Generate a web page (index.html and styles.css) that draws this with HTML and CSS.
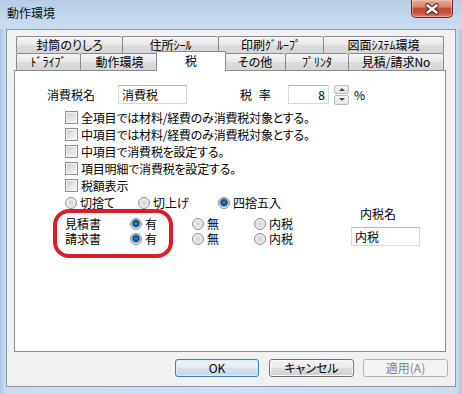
FILE: index.html
```html
<!DOCTYPE html>
<html lang="ja">
<head>
<meta charset="utf-8">
<title>動作環境</title>
<link rel="stylesheet" href="styles.css">
</head>
<body>
<div class="window">
  <div class="titlebar">
    <span class="title">動作環境</span>
    <div class="close">
      <svg width="40" height="16" viewBox="0 0 40 16">
        <path d="M15.5 4.5 L24.5 11.5 M24.5 4.5 L15.5 11.5" stroke="#4a1a14" stroke-width="4.6" stroke-linecap="round" fill="none"/>
        <path d="M15.5 4.5 L24.5 11.5 M24.5 4.5 L15.5 11.5" stroke="#ffffff" stroke-width="2.6" stroke-linecap="round" fill="none"/>
      </svg>
    </div>
  </div>
  <div class="client">
    <div class="tabs">
      <div class="tabrow">
        <div class="tab t-futo">封筒のりしろ</div>
        <div class="tab t-jusho">住所ｼｰﾙ</div>
        <div class="tab t-insatsu">印刷ｸﾞﾙｰﾌﾟ</div>
        <div class="tab t-zumen last">図面ｼｽﾃﾑ環境</div>
      </div>
      <div class="tabrow">
        <div class="tab t-drive">ﾄﾞﾗｲﾌﾞ</div>
        <div class="tab t-dosa">動作環境</div>
        <div class="tab selected">税</div>
        <div class="tab t-sonota">その他</div>
        <div class="tab t-printer">ﾌﾟﾘﾝﾀ</div>
        <div class="tab t-mitsu last">見積/請求No</div>
      </div>
    </div>
    <div class="panel">
      <div class="content">
        <div class="row-a">
          <span class="lbl-name">消費税名</span>
          <div class="field f-name">消費税</div>
          <span class="lbl-rate">税&nbsp;率</span>
          <div class="field f-rate">8</div>
          <div class="spin">
            <div class="spin-btn"><span class="arr up"></span></div>
            <div class="spin-btn"><span class="arr down"></span></div>
          </div>
          <span class="pct">%</span>
        </div>
        <div class="checks">
          <div class="check-row"><span class="cb"></span><span>全項目では材料/経費のみ消費税対象とする。</span></div>
          <div class="check-row"><span class="cb"></span><span>中項目では材料/経費のみ消費税対象とする。</span></div>
          <div class="check-row"><span class="cb"></span><span>中項目で消費税を設定する。</span></div>
          <div class="check-row"><span class="cb"></span><span>項目明細で消費税を設定する。</span></div>
          <div class="check-row"><span class="cb"></span><span>税額表示</span></div>
        </div>
        <div class="lower">
          <div class="lower-left">
            <div class="round-row">
              <div class="ropt w-kiri"><span class="radio"></span><span>切捨て</span></div>
              <div class="ropt w-age"><span class="radio"></span><span>切上げ</span></div>
              <div class="ropt"><span class="radio on"></span><span>四捨五入</span></div>
            </div>
            <div class="doc-rows">
              <div class="doc-row">
                <span class="doc-lbl">見積書</span>
                <div class="ropt w-doc"><span class="radio on"></span><span>有</span></div>
                <div class="ropt w-doc"><span class="radio"></span><span>無</span></div>
                <div class="ropt"><span class="radio"></span><span>内税</span></div>
              </div>
              <div class="doc-row">
                <span class="doc-lbl">請求書</span>
                <div class="ropt w-doc"><span class="radio on"></span><span>有</span></div>
                <div class="ropt w-doc"><span class="radio"></span><span>無</span></div>
                <div class="ropt"><span class="radio"></span><span>内税</span></div>
              </div>
            </div>
          </div>
          <div class="lower-right">
            <div class="lbl-uchi">内税名</div>
            <div class="field f-uchi">内税</div>
          </div>
        </div>
      </div>
      <div class="mark"></div>
    </div>
    <div class="buttons">
      <div class="btn default b-ok">OK</div>
      <div class="btn b-cancel">キャンセル</div>
      <div class="btn disabled b-apply">適用(A)</div>
    </div>
  </div>
</div>
</body>
</html>
```
FILE: styles.css
```css
* { box-sizing: border-box; }
html, body { margin: 0; padding: 0; }
body {
  width: 462px;
  height: 394px;
  overflow: hidden;
  font-family: "Noto Sans CJK JP", "Noto Sans", sans-serif;
  font-size: 12px;
  line-height: 14px;
  color: #000;
  font-feature-settings: "palt";
  background: #c4d7ed;
}
.window {
  width: 462px;
  height: 394px;
  display: flex;
  flex-direction: column;
  background: linear-gradient(to right, #aec8e5 0, #c9dcf0 5px, #cfe0f2 50%, #c9dcf0 457px, #aec8e5 462px);
}
.titlebar {
  height: 29px;
  flex: none;
  display: flex;
  justify-content: space-between;
  align-items: flex-start;
  padding-left: 7px;
  background: linear-gradient(to bottom, #b8cde5 0, #c5d8ed 60%, #cadcf0 100%);
}
.title {
  margin-top: 6px;
  line-height: 14px;
  color: #111;
}
.close {
  width: 42px;
  height: 18px;
  margin-right: 9px;
  border: 1px solid #6e2a22;
  border-top: none;
  border-radius: 0 0 5px 5px;
  background: linear-gradient(to bottom, #e8a898 0, #d98572 40%, #c44a35 50%, #c8533c 75%, #df7f5f 100%);
  box-shadow: inset 0 0 0 1px rgba(255, 220, 210, 0.45);
  display: flex;
  align-items: center;
  justify-content: center;
}
.client {
  flex: 1;
  margin: 0 6px 7px 6px;
  border: 1px solid #8b98a8;
  background: #f0f0f0;
  padding: 6px 7px 9px 7px;
  display: flex;
  flex-direction: column;
}
.tabs {
  width: 432px;
  padding-left: 2px;
  flex: none;
}
.tabrow {
  display: flex;
  height: 17px;
}
.tab {
  height: 17px;
  border: 1px solid #898c95;
  border-right: none;
  border-bottom: none;
  border-radius: 2px 2px 0 0;
  background: linear-gradient(to bottom, #f4f4f4 0, #e8e8e8 50%, #dcdcdc 51%, #d6d6d6 100%);
  display: flex;
  align-items: center;
  justify-content: center;
  line-height: 14px;
  white-space: nowrap;
}
.tab.last { border-right: 1px solid #898c95; }
.t-futo { width: 106px; }
.t-jusho { width: 96px; }
.t-insatsu { width: 105px; }
.t-zumen { width: 121px; }
.t-drive { width: 64px; }
.t-dosa { width: 78px; }
.t-sonota { width: 61px; }
.t-printer { width: 63px; }
.t-mitsu { width: 96px; }
.tab.selected {
  position: relative;
  z-index: 2;
  width: 70px;
  height: 20px;
  margin: -2px -2px -1px -2px;
  background: #fff;
  border-right: 1px solid #898c95;
  padding-bottom: 1px;
}
.panel {
  position: relative;
  width: 432px;
  flex: 1;
  background: #fff;
  border: 1px solid #898c95;
}
.content {
  padding: 14px 0 0 32px;
}
.row-a {
  display: flex;
  align-items: center;
  height: 19px;
}
.lbl-name { width: 71px; }
.field {
  height: 19px;
  border: 1px solid #d5d7dc;
  border-top-color: #b5b8bf;
  background: #fff;
  padding: 0 3px;
  line-height: 17px;
  white-space: nowrap;
}
.f-name { width: 69px; }
.lbl-rate { width: 48px; margin-left: 53px; letter-spacing: 2px; }
.f-rate { width: 41px; text-align: right; }
.spin {
  width: 15px;
  height: 20px;
  margin-left: 5px;
  display: flex;
  flex-direction: column;
  gap: 1px;
}
.spin-btn {
  flex: 1;
  border: 1px solid #b7bcc3;
  border-radius: 2px;
  background: linear-gradient(to bottom, #f7f7f7, #e2e4e7);
  display: flex;
  align-items: center;
  justify-content: center;
}
.arr {
  width: 0;
  height: 0;
  border-left: 3px solid transparent;
  border-right: 3px solid transparent;
}
.arr.up { border-bottom: 3px solid #4d4d4d; }
.arr.down { border-top: 3px solid #4d4d4d; }
.pct { margin-left: 5px; }
.checks {
  margin-top: 5px;
  margin-left: 18px;
}
.check-row {
  height: 17px;
  display: flex;
  align-items: center;
  gap: 3px;
  white-space: nowrap;
  letter-spacing: -0.2px;
}
.cb {
  width: 13px;
  height: 13px;
  flex: none;
  border: 1px solid #8e8f8f;
  background: linear-gradient(135deg, #c6cad0 0, #e3e5e8 55%, #f7f7f7 100%);
  box-shadow: inset 0 0 0 1px #f4f4f4;
}
.lower {
  display: flex;
}
.lower-left { width: 304px; }
.round-row {
  height: 17px;
  padding-left: 18px;
  display: flex;
  align-items: center;
}
.ropt {
  display: flex;
  align-items: center;
  gap: 3px;
  white-space: nowrap;
}
.w-kiri { width: 73px; }
.w-age { width: 80px; }
.radio {
  width: 12px;
  height: 12px;
  flex: none;
  border-radius: 50%;
  border: 1px solid #8c8f93;
  background: radial-gradient(circle at 50% 50%, #d0d2d5 0, #e4e5e7 45%, #f7f7f7 100%);
}
.radio.on {
  background: radial-gradient(circle at 50% 45%, #5aa0d6 0, #1f5f96 1.5px, #184c7c 3px, #7fa8c9 4px, #e6ecf2 5px, #f7f7f7 100%);
}
.doc-rows {
  margin-top: 5px;
  padding-left: 18px;
}
.doc-row {
  height: 15px;
  line-height: 13px;
  display: flex;
  align-items: center;
}
.doc-lbl { width: 65px; }
.w-doc { width: 62px; }
.lower-right {
  margin-top: 13px;
}
.lbl-uchi {
  line-height: 14px;
  padding-left: 9px;
}
.f-uchi {
  width: 69px;
  margin-top: 6px;
  padding-left: 3px;
}
.mark {
  position: absolute;
  left: 38px;
  top: 138px;
  width: 120px;
  height: 49px;
  border: 4px solid #d81e27;
  border-radius: 16px;
  z-index: 3;
}
.buttons {
  flex: none;
  margin-top: 7px;
  height: 18px;
  display: flex;
  justify-content: flex-end;
}
.btn {
  height: 18px;
  border: 1px solid #707070;
  border-radius: 3px;
  background: linear-gradient(to bottom, #f3f3f3 0, #ebebeb 50%, #dddddd 51%, #d0d0d0 100%);
  box-shadow: inset 0 0 0 1px #fbfbfb;
  display: flex;
  align-items: center;
  justify-content: center;
  line-height: 14px;
  white-space: nowrap;
}
.btn.default {
  border-color: #3c7fb1;
  background: linear-gradient(to bottom, #eef4f9 0, #e3ebf2 50%, #d5e0ea 51%, #c9d7e4 100%);
  box-shadow: inset 0 0 0 1px #d9ecf8;
}
.btn.disabled {
  border-color: #adb2b5;
  background: #f4f4f4;
  box-shadow: none;
  color: #838383;
}
.b-ok { width: 84px; }
.b-cancel { width: 85px; margin-left: 10px; }
.b-apply { width: 85px; margin-left: 9px; }
```
